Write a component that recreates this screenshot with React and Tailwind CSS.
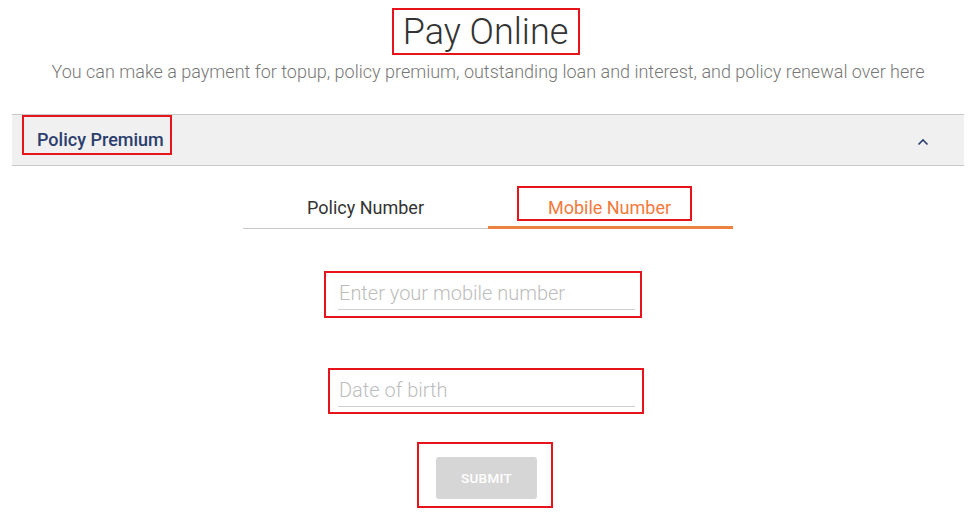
import React from "react"

function Chevron() {
  return (
    <svg width="12" height="8" viewBox="0 0 12 8" fill="none">
      <path d="M1.5 6.5 L6 2 L10.5 6.5" stroke="#2b3e6e" strokeWidth="1.6" />
    </svg>
  )
}

export default function App() {
  return (
    <div className="w-[976px] h-[514px] overflow-hidden bg-white font-['Roboto',sans-serif]">
      {/* heading */}
      <div className="flex flex-col items-center pt-[8px]">
        <div className="mr-[5px] h-[47px] w-[188px] border-2 border-[#e8141b] flex items-center justify-center">
          <h1 className="text-[36px] font-light leading-none text-[#333] mt-[1px]">Pay Online</h1>
        </div>
        <p className="mt-[7px] text-[18px] font-light leading-[20px] text-[#777]">
          You can make a payment for topup, policy premium, outstanding loan and interest, and policy renewal over here
        </p>
      </div>

      {/* accordion header */}
      <div className="mx-[12px] mt-[32px] h-[52px] bg-[#f0f0f0] border-y border-[#c9c9c9] flex justify-between">
        <div className="ml-[10px] h-[40px] w-[150px] border-2 border-[#e8141b] flex items-center pl-[13px] pt-[8px]">
          <span className="text-[18px] font-medium text-[#2b3e6e]">Policy Premium</span>
        </div>
        <div className="mr-[35px] flex items-center pt-[4px]">
          <Chevron />
        </div>
      </div>

      {/* tabs */}
      <div className="mx-auto mt-[20px] w-[490px] flex">
        <div className="flex-1 h-[43px] border-b border-[#c9c9c9] flex justify-center pt-[12px]">
          <span className="text-[18px] leading-[20px] text-[#333]">Policy Number</span>
        </div>
        <div className="flex-1 h-[43px] border-b-[3px] border-[#ee8240] flex justify-center">
          <div className="mr-[12px] h-[35px] w-[175px] border-2 border-[#e8141b] flex items-end justify-center pb-[1px] pl-[10px]">
            <span className="text-[18px] leading-[20px] text-[#f27a3c]">Mobile Number</span>
          </div>
        </div>
      </div>

      {/* inputs */}
      <div className="flex flex-col">
        <div className="ml-[324px] mt-[42px] h-[47px] w-[318px] border-2 border-[#e8141b] pt-[7px] pl-[12px]">
          <input
            placeholder="Enter your mobile number"
            className="w-[297px] h-[30px] border-b border-[#cfcfcf] text-[20px] font-light outline-none placeholder:text-[#bdbdbd] pb-[3px] px-[1px]"
          />
        </div>
        <div className="ml-[328px] mt-[50px] h-[46px] w-[316px] border-2 border-[#e8141b] pt-[7px] pl-[8px]">
          <input
            placeholder="Date of birth"
            className="w-[297px] h-[30px] border-b border-[#cfcfcf] text-[20px] font-light outline-none placeholder:text-[#bdbdbd] pb-[3px] px-[1px]"
          />
        </div>
        <div className="ml-[417px] mt-[28px] h-[66px] w-[136px] border-2 border-[#e8141b] pt-[13px] pl-[17px]">
          <button className="w-[101px] h-[42px] rounded-[3px] bg-[#d6d6d6] text-white text-[13.5px] font-medium tracking-[0.3px]">
            SUBMIT
          </button>
        </div>
      </div>
    </div>
  )
}
